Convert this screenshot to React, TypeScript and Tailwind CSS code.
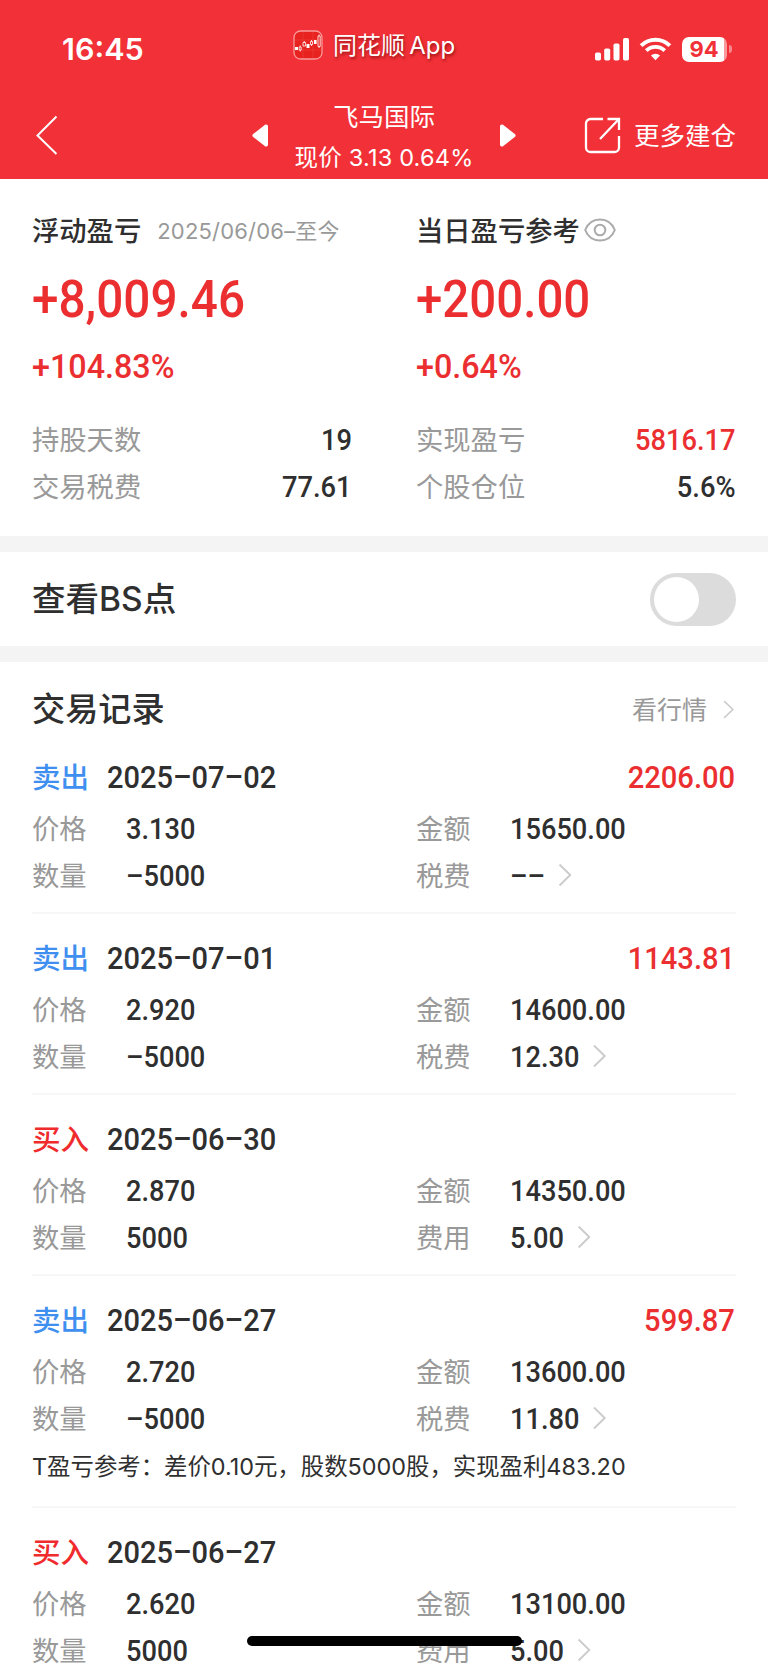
import { clsx } from "clsx";

interface TradeRecord {
  type: "buy" | "sell";
  date: string;
  profit?: string;
  price: string;
  amount: string;
  quantity: string;
  feeLabel: string;
  fee: string;
  note?: string;
}

const records: TradeRecord[] = [
  {
    type: "sell",
    date: "2025–07–02",
    profit: "2206.00",
    price: "3.130",
    amount: "15650.00",
    quantity: "–5000",
    feeLabel: "税费",
    fee: "––",
  },
  {
    type: "sell",
    date: "2025–07–01",
    profit: "1143.81",
    price: "2.920",
    amount: "14600.00",
    quantity: "–5000",
    feeLabel: "税费",
    fee: "12.30",
  },
  {
    type: "buy",
    date: "2025–06–30",
    price: "2.870",
    amount: "14350.00",
    quantity: "5000",
    feeLabel: "费用",
    fee: "5.00",
  },
  {
    type: "sell",
    date: "2025–06–27",
    profit: "599.87",
    price: "2.720",
    amount: "13600.00",
    quantity: "–5000",
    feeLabel: "税费",
    fee: "11.80",
    note: "T盈亏参考：差价0.10元，股数5000股，实现盈利483.20",
  },
  {
    type: "buy",
    date: "2025–06–27",
    price: "2.620",
    amount: "13100.00",
    quantity: "5000",
    feeLabel: "费用",
    fee: "5.00",
  },
];

// narrow numerals
const numFont = "font-['Roboto','Noto_Sans_CJK_SC',sans-serif] font-medium origin-left scale-x-[0.907]";
const numFontRight = "font-['Roboto','Noto_Sans_CJK_SC',sans-serif] font-medium origin-right scale-x-[0.91]";
const numFontLarge = "font-['Roboto','Noto_Sans_CJK_SC',sans-serif] font-medium origin-left text-[#eb2f31]";

const Chevron = ({ className }: { className?: string }) => (
  <svg viewBox="0 0 14 24" fill="none" preserveAspectRatio="none" className={className}>
    <path d="M1.5 1.5 12.500 12 1.500 22.5" stroke="#ccc" strokeWidth="2" />
  </svg>
);

const StatusBar = () => (
  <div className="flex h-[98px] items-center">
    <div className="w-[293px] pl-[62px] text-[30.5px] font-semibold leading-none">
      16:45
    </div>
    <div className="mt-[-8px] flex items-center gap-[10px]">
      <svg width="30" height="30" viewBox="0 0 30 30" fill="none">
        <rect x="1" y="1" width="28" height="28" rx="6.5" fill="#e8231f" stroke="#f89a9a" strokeWidth="1.3" />
        <path d="M2 10h26M2 20h26M10 2v26M20 2v26" stroke="#ee4541" strokeWidth=".5" />
        <path d="M2 17h3v3H2zM13.5 14h3v4h-3zM21 10h2.6v4H21z" fill="#fff" />
        <path d="M6.2 17h2v3h-2zM7.2 15.5V17m0 3v1.5M10 12.500h2.600v3.500H10zM11.300 11v1.500M17.500 11.500h2v3h-2zM18.500 10v1.500m0 3V16M25 6h2.200v10.500H25zM26.100 4.500V6m0 10.500V18" stroke="#fff" strokeWidth=".8" />
      </svg>
      <span className="mt-[1px] text-[24px] leading-none [word-spacing:-2.500px] [text-shadow:1px_2px_3px_rgba(90,0,0,0.6)]">
        同花顺 App
      </span>
    </div>
    <div className="ml-auto mr-[36px] flex items-center">
      <svg width="34" height="23" viewBox="0 0 34 23" fill="#fff">
        <rect x="0" y="14.500" width="6" height="8" rx="1.700" />
        <rect x="9.200" y="10.500" width="6" height="12" rx="1.700" />
        <rect x="18.500" y="5.500" width="6" height="17" rx="1.700" />
        <rect x="28" y="0" width="6" height="22.500" rx="1.700" />
      </svg>
      <svg className="ml-[10px]" width="33" height="24" viewBox="0 0 34 24" fill="none">
        <path d="M2.200 8.500a21 21 0 0 1 29.600 0" stroke="#fff" strokeWidth="4.200" />
        <path d="M7.500 13.700a13.500 13.500 0 0 1 19 0" stroke="#fff" strokeWidth="4" />
        <path d="M17 23.500l-4.700-4.700a6.600 6.600 0 0 1 9.400 0z" fill="#fff" />
      </svg>
      <div className="ml-[10px] flex items-center gap-[2px]">
        <div className="flex h-[25px] w-[45px] items-center justify-center rounded-[7px] bg-[linear-gradient(90deg,#fff_94%,#f99a9d_94%)] pr-[1px] text-[22px] font-bold leading-none text-[#f23037]">
          94
        </div>
        <div className="h-[8px] w-[3px] rounded-r-full bg-[#f8888c]" />
      </div>
    </div>
  </div>
);

const NavBar = () => (
  <div className="flex h-[81px] items-start">
    <svg className="ml-[35px] mt-[17px]" width="23" height="41" viewBox="0 0 23 41" fill="none">
      <path d="M21.500 1.500 2.500 20.500l19 18.500" stroke="#fff" strokeWidth="2" />
    </svg>
    <svg className="ml-[194px] mt-[26px]" width="17" height="23" viewBox="0 0 17 23" fill="#fff">
      <path d="M13 .8 1.200 10a2 2 0 0 0 0 3L13 22.200c1.200.9 3 .1 3-1.500V2.300C16 .7 14.200-.1 13 .8z" />
    </svg>
    <div className="ml-[14px] flex w-[202px] flex-col items-center">
      <div className="h-[41px] text-[25.500px] leading-[37px]">飞马国际</div>
      <div className="whitespace-nowrap text-[23.500px] leading-[37px] tracking-[0.200px]">
        现价 3.13 0.64%
      </div>
    </div>
    <svg className="ml-[14px] mt-[26px]" width="17" height="23" viewBox="0 0 17 23" fill="#fff">
      <path d="M4 .8 15.800 10a2 2 0 0 1 0 3L4 22.200c-1.200.9-3 .1-3-1.500V2.300C1 .7 2.800-.1 4 .8z" />
    </svg>
    <svg className="ml-[68px] mt-[19px]" width="37" height="37" viewBox="0 0 37 37" fill="none">
      <path d="M19 2H6.500A4.500 4.500 0 0 0 2 6.500v24A4.500 4.500 0 0 0 6.500 35h24a4.500 4.500 0 0 0 4.500-4.500V19M23.500 2H35v11M35 2 16 22" stroke="#fff" strokeWidth="2.300" />
    </svg>
    <div className="ml-[13px] mt-[19px] whitespace-nowrap text-[25.500px] leading-[37px]">
      更多建仓
    </div>
  </div>
);

const StatRow = ({ label, value, red }: { label: string; value: string; red?: boolean }) => (
  <div className="flex h-[47px] items-center justify-between">
    <span className="mt-[3px] text-[27.300px] text-[#999]">{label}</span>
    <span className={clsx(numFontRight, "text-[30px]", red && "text-[#eb2f31]")}>{value}</span>
  </div>
);

const Summary = () => (
  <section className="grid h-[357px] shrink-0 grid-cols-2 gap-x-16 px-8 pt-[33px]">
    <div>
      <div className="flex h-[38px] items-center gap-[16px]">
        <span className="mt-[2px] text-[27.300px] font-medium">浮动盈亏</span>
        <span className="whitespace-nowrap text-[22px] tracking-[0.200px] text-[#999]">
          2025/06/06–至今
        </span>
      </div>
      <div className={clsx(numFontLarge, "mt-[20px] h-[60px] scale-x-[0.935] text-[51px] leading-[60px]")}>
        +8,009.46
      </div>
      <div className={clsx(numFontLarge, "mt-[16px] h-[40px] scale-x-[0.95] text-[34px] leading-[40px]")}>
        +104.83%
      </div>
      <div className="mt-[30px]">
        <StatRow label="持股天数" value="19" />
        <StatRow label="交易税费" value="77.61" />
      </div>
    </div>
    <div>
      <div className="flex h-[38px] items-center gap-[4px]">
        <span className="mt-[2px] text-[27.300px] font-medium">当日盈亏参考</span>
        <svg className="mt-[-2px]" width="32" height="24" viewBox="0 0 32 24" fill="none" stroke="#aaa" strokeWidth="2">
          <path d="M1.200 12C4 5 9.500 1.500 16 1.500S28 5 30.800 12C28 19 22.500 22.500 16 22.500S4 19 1.200 12z" />
          <circle cx="16" cy="12" r="5.300" />
        </svg>
      </div>
      <div className={clsx(numFontLarge, "mt-[20px] h-[60px] scale-x-[0.93] text-[51px] leading-[60px]")}>
        +200.00
      </div>
      <div className={clsx(numFontLarge, "mt-[16px] h-[40px] scale-x-[0.95] text-[34px] leading-[40px]")}>
        +0.64%
      </div>
      <div className="mt-[30px]">
        <StatRow label="实现盈亏" value="5816.17" red />
        <StatRow label="个股仓位" value="5.6%" />
      </div>
    </div>
  </section>
);

const Field = ({ label, value, arrow }: { label: string; value: string; arrow?: boolean }) => (
  <div className="flex h-[47px] items-center">
    <span className="mt-[3px] w-[94px] text-[27.300px] text-[#999]">{label}</span>
    <div className={clsx(numFont, "flex items-center text-[30px]")}>
      {value}
      {arrow && <Chevron className="mt-[-2px] ml-[14px] h-[24px] w-[15px]" />}
    </div>
  </div>
);

const RecordItem = ({ record }: { record: TradeRecord }) => (
  <article
    className={clsx(
      "shrink-0 border-b-2 border-[#f7f7f7] pt-[23px]",
      record.note ? "h-[232px]" : "h-[181.100px]"
    )}
  >
    <div className="flex h-[42px] items-center">
      <span
        className={clsx(
          "mt-[2px] w-[75px] text-[28.500px] font-medium",
          record.type === "buy" ? "text-[#f02b2d]" : "text-[#3f8ff0]"
        )}
      >
        {record.type === "buy" ? "买入" : "卖出"}
      </span>
      <span className={clsx(numFont, "text-[32px]")}>{record.date}</span>
      {record.profit && (
        <span className={clsx(numFontRight, "ml-auto pr-[1px] text-[32px] text-[#eb2f31]")}>
          {record.profit}
        </span>
      )}
    </div>
    <div className="mt-[7px] grid grid-cols-2 gap-x-16">
      <Field label="价格" value={record.price} />
      <Field label="金额" value={record.amount} />
      <Field label="数量" value={record.quantity} />
      <Field label={record.feeLabel} value={record.fee} arrow />
    </div>
    {record.note && (
      <div className="whitespace-nowrap text-[23.400px] leading-[49px]">{record.note}</div>
    )}
  </article>
);

const App = () => {
  return (
    <main className="relative flex h-[1663px] w-[768px] flex-col overflow-hidden bg-white font-['Inter','Noto_Sans_CJK_SC',sans-serif] text-[#2f2f2f]">
      <header className="h-[179px] shrink-0 bg-[#f23037] text-white">
        <StatusBar />
        <NavBar />
      </header>

      <Summary />

      <section className="flex h-[126px] shrink-0 items-center justify-between border-y-[16px] border-[#f4f4f4] px-8">
        <span className="text-[33.500px] font-medium">查看BS点</span>
        <button className="flex h-[53px] w-[86px] items-center rounded-full bg-[#dcdcdc] pl-[4px]">
          <span className="size-[45px] rounded-full bg-white" />
        </button>
      </section>

      <section className="px-8">
        <div className="flex h-[71px] items-center justify-between pt-[24px]">
          <h2 className="text-[33.200px] font-medium">交易记录</h2>
          <div className="flex items-center gap-[16px] pr-[2px] text-[25px] text-[#999]">
            <span className="mt-[2px]">看行情</span>
            <Chevron className="h-[19px] w-[11px]" />
          </div>
        </div>
        {records.map((record, index) => (
          <RecordItem key={index} record={record} />
        ))}
      </section>

      {/* home indicator */}
      <div className="absolute left-[247px] top-[1636px] h-[10px] w-[275px] rounded-full bg-black" />
    </main>
  );
};

export default App;
